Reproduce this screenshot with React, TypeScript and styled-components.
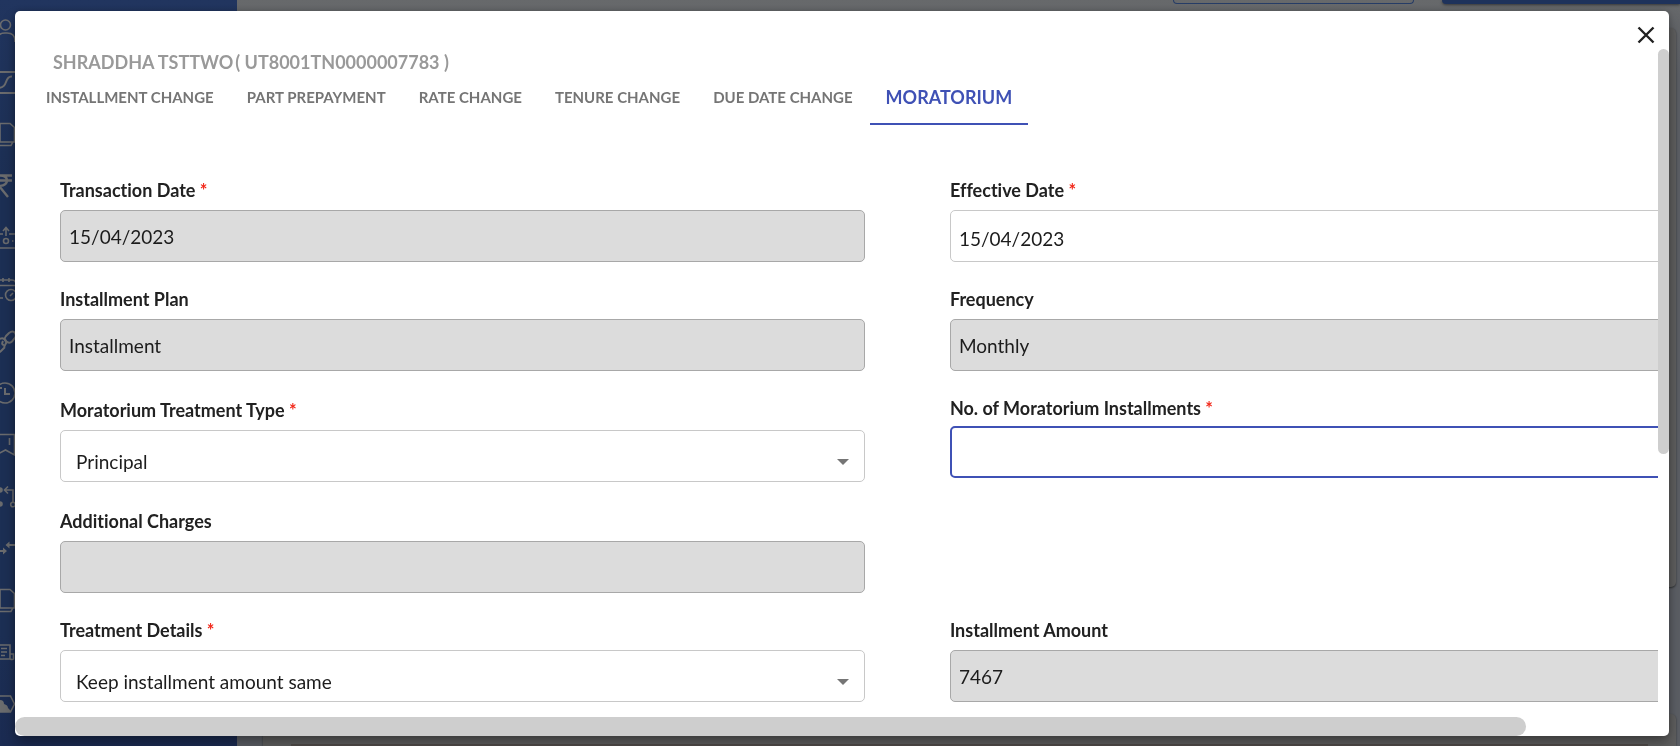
import React, { useState } from "react";
import styled, { createGlobalStyle, css } from "styled-components";

const GlobalStyle = createGlobalStyle`
  *, *::before, *::after { box-sizing: border-box; }
  html, body, #root { height: 100%; }
  body {
    margin: 0;
    overflow: hidden;
    font-family: Lato, "Liberation Sans", sans-serif;
    font-variant-ligatures: none;
    color: #212121;
  }
  button, input, select { font-family: inherit; font-variant-ligatures: inherit; }
`;

const Page = styled.div`
  display: flex;
  height: 100vh;
  overflow: hidden;
  background: #626569;
`;

const Sidebar = styled.nav`
  flex: 0 0 237px;
  display: flex;
  flex-direction: column;
  padding-top: 4px;
  background: linear-gradient(#21355f, #1c2f54 25%, #1c2f54 85%, #1b2b52);
`;

const NavLink = styled.a`
  display: block;
  height: 52px;
  color: #6b6c6e;
  svg { display: block; }
`;

const Background = styled.div`
  flex: 1;
  min-width: 0;
  display: flex;
  flex-direction: column;
  background: linear-gradient(#67696b, #5c5f65 10%, #5c5f65);
`;

const ActionBar = styled.div`
  display: flex;
  justify-content: flex-end;
  gap: 28px;
  height: 28px;
`;

const OutlineAction = styled.button`
  width: 241px;
  height: 4px;
  padding: 0;
  border: 1px solid #263c66;
  border-top: 0;
  border-radius: 0 0 4px 4px;
  background: transparent;
`;

const SolidAction = styled.button`
  width: 238px;
  height: 4px;
  padding: 0;
  border: 0;
  border-radius: 0 0 0 4px;
  background: #1e325b;
  box-shadow: 0 1px 3px rgba(0, 0, 0, 0.5);
`;

const Card = styled.div`
  height: 559px;
  margin: 0 4px 0 26px;
  border-radius: 5px;
  background: #5f5f5f;
  box-shadow: 0 1px 2px rgba(0, 0, 0, 0.5);
`;

const LowerCard = styled(Card)`
  height: auto;
  flex: 1;
  margin-top: 127px;
  padding: 30px 28px 0;
  border-radius: 5px 5px 0 0;
  div { height: 100%; background: #514c4a; }
`;

const Dialog = styled.section`
  position: fixed;
  inset: 11px 11px 10px 15px;
  display: grid;
  grid-template: 38px minmax(0, 1fr) 19px / minmax(0, 1fr) 11px;
  border-radius: 5px;
  overflow: hidden;
  background: #fff;
`;

const DialogShadow = styled.div`
  position: fixed;
  inset: 11px 11px 10px 15px;
  border-radius: 5px;
  box-shadow: 0 8px 14px rgba(0, 0, 0, 0.3), 0 0 6px rgba(0, 0, 0, 0.2);
`;

const CloseRow = styled.div`
  grid-column: 1 / -1;
  display: flex;
  justify-content: flex-end;
  align-items: flex-start;
  padding: 13px 12px 0 0;
`;

const CloseButton = styled.button`
  display: flex;
  padding: 0;
  border: 0;
  background: none;
  color: #212121;
  cursor: pointer;
`;

const Viewport = styled.div`
  overflow: hidden;
`;

const Content = styled.div`
  width: 109%;
`;

const Customer = styled.h1`
  display: flex;
  gap: 2px;
  margin: 0 0 0 38px;
  padding-top: 1px;
  font-size: 18px;
  line-height: 24px;
  font-weight: 700;
  color: #999;
`;

const Tabs = styled.div`
  display: flex;
  gap: 1px;
  margin-left: 15px;
`;

const Tab = styled.button<{ $active?: boolean }>`
  height: 51px;
  padding: 0 16px 3px;
  border: 0;
  border-bottom: 2px solid ${(p) => (p.$active ? "#3f51b5" : "transparent")};
  background: none;
  white-space: nowrap;
  font-size: ${(p) => (p.$active ? 18 : 15)}px;
  font-weight: 700;
  line-height: 24px;
  color: ${(p) => (p.$active ? "#3f51b5" : "#757575")};
  cursor: pointer;
`;

const Form = styled.form`
  display: grid;
  grid-template-columns: 1fr 1fr;
  column-gap: 85px;
  row-gap: 25px;
  padding: 53px 51px 0 45px;
`;

const Field = styled.div<{ $lowered?: boolean; $tight?: boolean; $first?: boolean }>`
  display: flex;
  flex-direction: column;
  gap: ${(p) => (p.$tight ? 6 : 8)}px;
  padding: ${(p) => (p.$lowered ? 2 : 0)}px 0;
  ${(p) => p.$first && css`grid-column: 1;`}
`;

const Label = styled.label`
  font-size: 18px;
  line-height: 24px;
  font-weight: 700;
`;

const Required = styled.span`
  color: #f2281a;
`;

const control = css`
  width: 100%;
  height: 52px;
  margin: 0;
  border: 1px solid #c8c8c8;
  border-radius: 5px;
  outline: 0;
  background: #fff;
  color: #1c1c1c;
  font-size: 19px;
  line-height: 24px;
`;

const Input = styled.input<{ $focused?: boolean }>`
  ${control}
  padding: ${(p) => (p.disabled ? "0 8px" : "5px 8px 0")};
  ${(p) => p.disabled && css`background: #dcdcdc; border-color: #a8a8a8; opacity: 1;`}
  ${(p) => p.$focused && css`border: 2px solid #3f51b5;`}
`;

const SelectBox = styled.div`
  display: grid;
  align-items: center;
  > * { grid-area: 1 / 1; }
  svg { justify-self: end; margin: 12px 16px 0 0; pointer-events: none; }
`;

const Select = styled.select`
  ${control}
  appearance: none;
  padding: 12px 40px 0 15px;
`;

const VerticalTrack = styled.div`
  display: flex;
`;

const VerticalThumb = styled.div`
  width: 100%;
  height: calc(100% * 20 / 33);
  border-radius: 6px;
  background: #cecece;
`;

const HorizontalTrack = styled.div`
  grid-column: 1 / -1;
`;

const HorizontalThumb = styled.div`
  width: calc(92% - 11px);
  height: 100%;
  border-radius: 10px;
  background: #cecece;
`;

type NavItem = { name: string; icon: React.ReactNode };

const documents = <path d="M0 15.500h10l4.500 4V34H0M0 37.500h11l1.500-3M0 15V34" />;

const navItems: NavItem[] = [
  {
    name: "Customers",
    icon: (
      <>
        <circle cx="5.500" cy="21" r="5" />
        <path d="M-3 38v-1q0-8 8-8h2q8 0 8 8v1" />
      </>
    ),
  },
  {
    name: "Analytics",
    icon: <path strokeWidth="2" d="M-4 16h22M-4 37h22M-2 32q6 0 8-6t6-5.500" />,
  },
  { name: "Documents", icon: documents },
  {
    name: "Payments",
    icon: <path strokeWidth="2.400" d="M-2 15.500H12M-2 20.500H12M0 15.500q7 0 7 5t-8 5.500L8 37" />,
  },
  {
    name: "Disbursal",
    icon: (
      <>
        <path d="M6 24v-8M3 19l3-3.500 3 3.500M-2 22H3M9 22h7M-2 36h18" />
        <circle cx="6" cy="29" r="2.500" />
        <path d="M12 29h1.500" />
      </>
    ),
  },
  {
    name: "Schedules",
    icon: (
      <>
        <path d="M-2 16h14q4 0 4 5M3 14v4M9 14v4M-2 21.500H16M-2 34H3" />
        <circle cx="11" cy="31" r="5.500" />
        <path d="M10 32l3-3" />
      </>
    ),
  },
  {
    name: "Links",
    icon: (
      <g strokeWidth="2">
        <path d="M7 26q-4-2-1-6l3-3q4-3 6 0 2 3-1 6l-2 2.500q-2 2-5 .5" />
        <path d="M-2 24q4-3 6-1 4 2 1 6l-1 2M3 25q-2 4 1 4M5 31l-4 4q-2 2-4 1" />
      </g>
    ),
  },
  {
    name: "History",
    icon: (
      <>
        <circle cx="5" cy="25" r="10" />
        <path strokeWidth="2" d="M5 20v6h5M-1 20h3" />
      </>
    ),
  },
  {
    name: "Bookmarks",
    icon: <path d="M-2 14.500H14.500V35L5.500 30 -2 34M9.500 18v7" />,
  },
  {
    name: "Workflow",
    icon: (
      <>
        <path d="M13 30V18H5M8 14.500L4.500 18 8 21.500" />
        <circle cx="13" cy="32.500" r="2.300" />
        <circle cx="0" cy="18" r="2" fill="currentColor" />
        <circle cx="0" cy="32" r="2" fill="currentColor" />
      </>
    ),
  },
  {
    name: "Transfers",
    icon: (
      <>
        <path strokeWidth="1.800" d="M16 21H7M-2 27H6" />
        <path fill="currentColor" stroke="none" d="M5.500 21l4-3.500v7zM7 27l-4-3.500v7z" />
      </>
    ),
  },
  { name: "Files", icon: <g transform="translate(0 -2)">{documents}</g> },
  {
    name: "Statements",
    icon: <path d="M-2 17H10V31H-2M10 26h3.500v5q-1 1-3.500 0M1 20.500h6M1 24h6M1 27.500h4" />,
  },
  {
    name: "Settings",
    icon: (
      <>
        <path d="M-2 16H10.500L14.500 24 10.500 32H-2" />
        <path d="M0 20q4 0 4 4 4 1 4 4 2 2 3 3l-1 1H-2V20z" fill="currentColor" stroke="none" />
      </>
    ),
  },
];

const tabs = [
  "INSTALLMENT CHANGE",
  "PART PREPAYMENT",
  "RATE CHANGE",
  "TENURE CHANGE",
  "DUE DATE CHANGE",
  "MORATORIUM",
];

function FieldLabel({ id, text, required }: { id: string; text: string; required?: boolean }) {
  return (
    <Label htmlFor={id}>
      {text}
      {required && <Required> *</Required>}
    </Label>
  );
}

function SelectField({ id, options }: { id: string; options: string[] }) {
  return (
    <SelectBox>
      <Select id={id} defaultValue={options[0]}>
        {options.map((o) => (
          <option key={o}>{o}</option>
        ))}
      </Select>
      <svg width="12" height="6" viewBox="0 0 12 6" aria-hidden="true">
        <path d="M0 0h12L6 6z" fill="#757575" />
      </svg>
    </SelectBox>
  );
}

export default function App() {
  const [active, setActive] = useState("MORATORIUM");
  return (
    <>
      <GlobalStyle />
      <Page>
        <Sidebar>
          {navItems.map((item) => (
            <NavLink key={item.name} href="#" aria-label={item.name}>
              <svg width="16" height="52" viewBox="0 0 16 52" fill="none" stroke="currentColor" strokeWidth="1.600">
                {item.icon}
              </svg>
            </NavLink>
          ))}
        </Sidebar>
        <Background>
          <ActionBar>
            <OutlineAction type="button" aria-label="Cancel" />
            <SolidAction type="button" aria-label="Save" />
          </ActionBar>
          <Card />
          <LowerCard><div /></LowerCard>
        </Background>
      </Page>
      <DialogShadow />
      <Dialog role="dialog" aria-modal="true" aria-labelledby="customer">
        <CloseRow>
          <CloseButton type="button" aria-label="Close">
            <svg width="22" height="22" viewBox="0 0 22 22" stroke="currentColor" strokeWidth="2.400">
              <path d="M3.500 3.500l15 15M18.500 3.500l-15 15" />
            </svg>
          </CloseButton>
        </CloseRow>
        <Viewport>
          <Content>
            <Customer id="customer">
              <span>SHRADDHA TSTTWO</span>
              <span>( UT8001TN0000007783 )</span>
            </Customer>
            <Tabs role="tablist">
              {tabs.map((t) => (
                <Tab key={t} type="button" role="tab" aria-selected={t === active} $active={t === active} onClick={() => setActive(t)}>
                  {t}
                </Tab>
              ))}
            </Tabs>
            <Form>
              <Field>
                <FieldLabel id="txn" text="Transaction Date" required />
                <Input id="txn" defaultValue="15/04/2023" disabled />
              </Field>
              <Field>
                <FieldLabel id="eff" text="Effective Date" required />
                <Input id="eff" defaultValue="15/04/2023" />
              </Field>
              <Field>
                <FieldLabel id="plan" text="Installment Plan" />
                <Input id="plan" defaultValue="Installment" disabled />
              </Field>
              <Field>
                <FieldLabel id="freq" text="Frequency" />
                <Input id="freq" defaultValue="Monthly" disabled />
              </Field>
              <Field $lowered>
                <FieldLabel id="type" text="Moratorium Treatment Type" required />
                <SelectField id="type" options={["Principal"]} />
              </Field>
              <Field $tight>
                <FieldLabel id="count" text="No. of Moratorium Installments" required />
                <Input id="count" $focused />
              </Field>
              <Field $first>
                <FieldLabel id="charges" text="Additional Charges" />
                <Input id="charges" disabled />
              </Field>
              <Field $first>
                <FieldLabel id="details" text="Treatment Details" required />
                <SelectField id="details" options={["Keep installment amount same"]} />
              </Field>
              <Field>
                <FieldLabel id="amount" text="Installment Amount" />
                <Input id="amount" defaultValue="7467" disabled />
              </Field>
            </Form>
          </Content>
        </Viewport>
        <VerticalTrack>
          <VerticalThumb />
        </VerticalTrack>
        <HorizontalTrack>
          <HorizontalThumb />
        </HorizontalTrack>
      </Dialog>
    </>
  );
}
